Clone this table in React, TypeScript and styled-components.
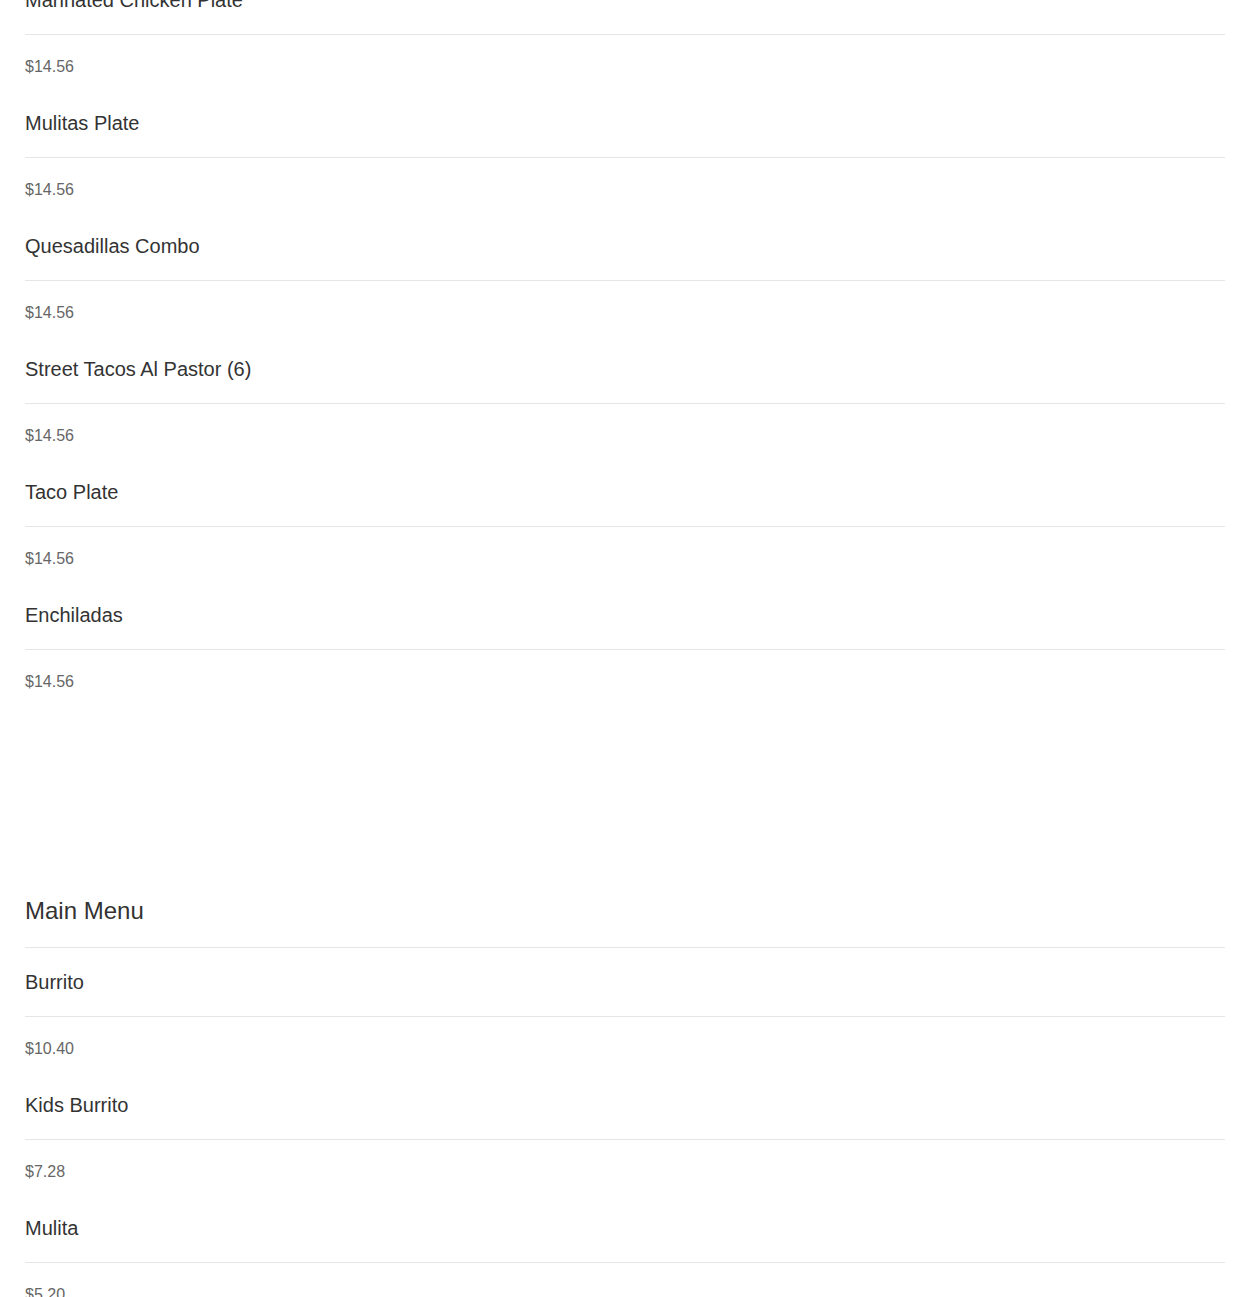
import styled, { createGlobalStyle } from 'styled-components';

const GlobalStyles = createGlobalStyle`
  body {
    margin: 0;
    background: #ffffff;
    font-family: 'Liberation Sans', Arial, sans-serif;
  }
`;

const Page = styled.div`
  padding: 0 25px;
  margin-top: -34px;
`;

const Section = styled.section<{ $first?: boolean }>`
  padding-top: ${(p) => (p.$first ? '0' : '192px')};
`;

const SectionTitle = styled.h2`
  margin: 0;
  padding: 1px 0 22px;
  font-size: 24px;
  line-height: 28px;
  font-weight: 400;
  color: #333333;
  border-bottom: 1px solid #e6e6e6;
`;

const Item = styled.div``;

const ItemName = styled.div`
  padding: 22px 0 22px;
  font-size: 20px;
  line-height: 24px;
  color: #333333;
  border-bottom: 1px solid #e6e6e6;
`;

const ItemPrice = styled.div`
  padding: 23px 0 13px;
  font-size: 16px;
  line-height: 18px;
  color: #666666;
`;

type MenuItem = { name: string; price: string };

const specials: MenuItem[] = [
  { name: 'Marinated Chicken Plate', price: '$14.56' },
  { name: 'Mulitas Plate', price: '$14.56' },
  { name: 'Quesadillas Combo', price: '$14.56' },
  { name: 'Street Tacos Al Pastor (6)', price: '$14.56' },
  { name: 'Taco Plate', price: '$14.56' },
  { name: 'Enchiladas', price: '$14.56' },
];

const mainMenu: MenuItem[] = [
  { name: 'Burrito', price: '$10.40' },
  { name: 'Kids Burrito', price: '$7.28' },
  { name: 'Mulita', price: '$5.20' },
];

function App() {
  return (
    <>
      <GlobalStyles />
      <Page>
        <Section $first>
          {specials.map((item) => (
            <Item key={item.name}>
              <ItemName>{item.name}</ItemName>
              <ItemPrice>{item.price}</ItemPrice>
            </Item>
          ))}
        </Section>
        <Section>
          <SectionTitle>Main Menu</SectionTitle>
          {mainMenu.map((item) => (
            <Item key={item.name}>
              <ItemName>{item.name}</ItemName>
              <ItemPrice>{item.price}</ItemPrice>
            </Item>
          ))}
        </Section>
      </Page>
    </>
  );
}

export default App;
